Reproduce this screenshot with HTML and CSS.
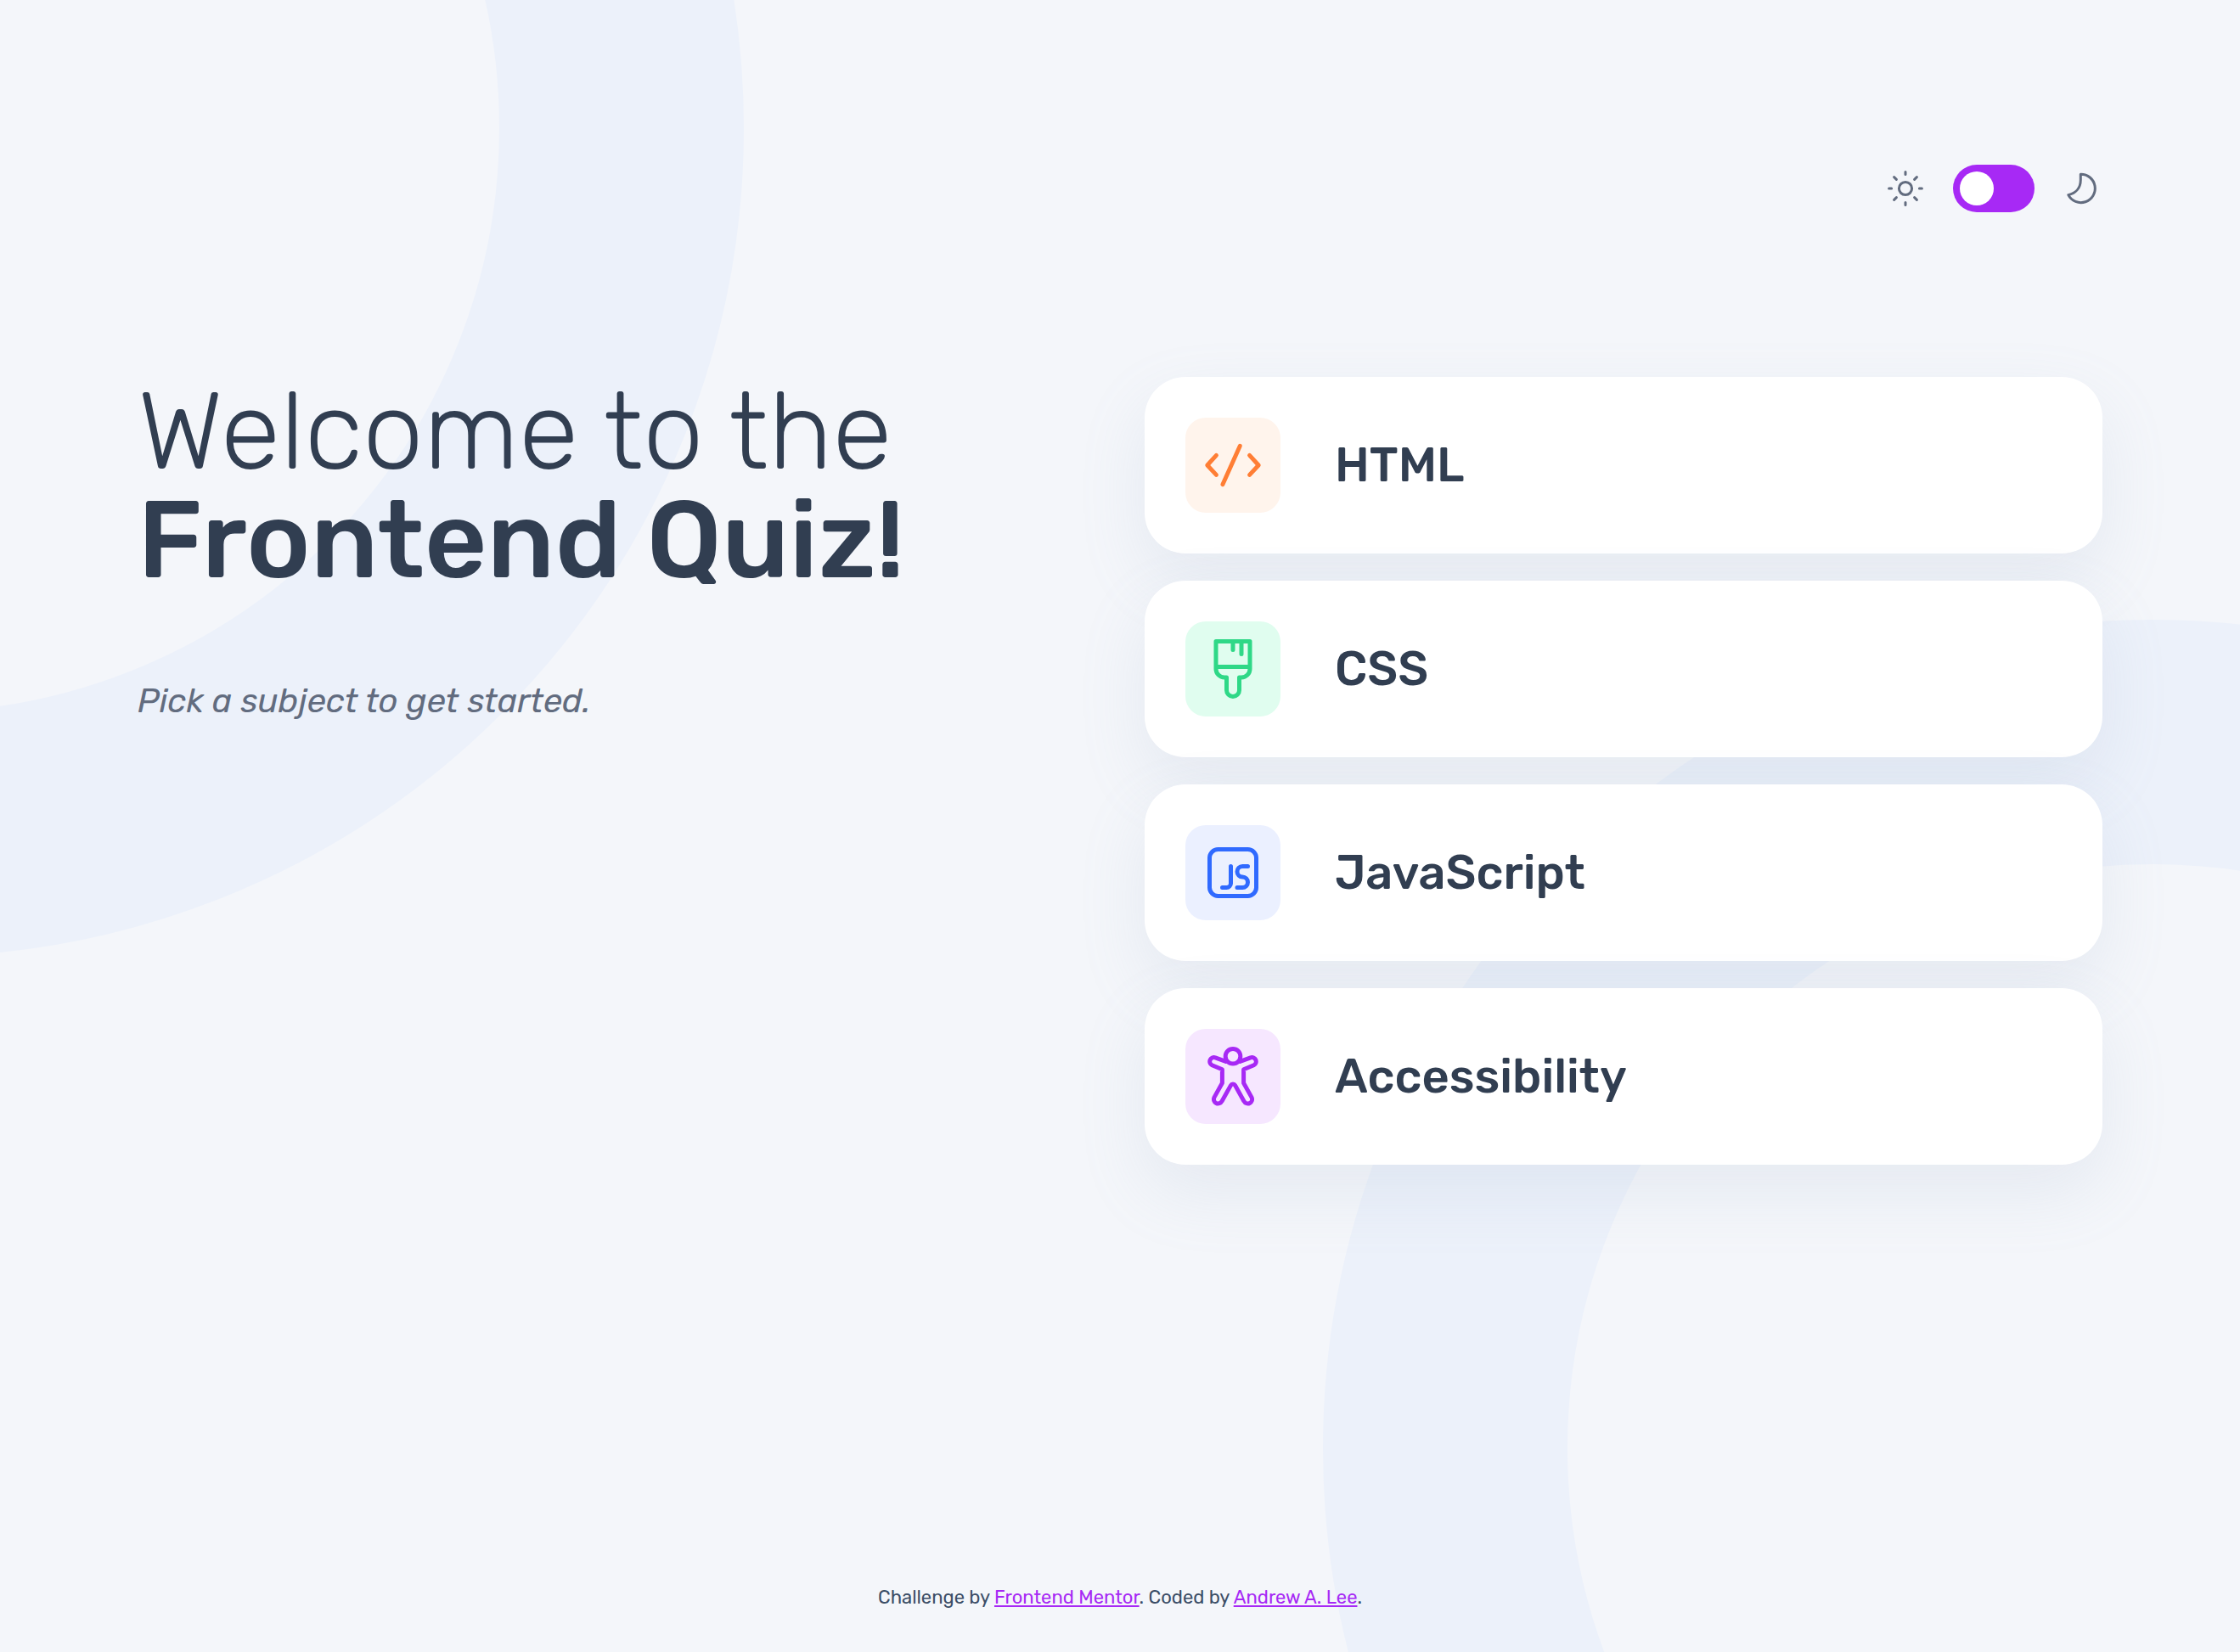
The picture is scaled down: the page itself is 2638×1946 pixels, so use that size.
FILE: index.html
```html
<!DOCTYPE html>
<html lang="en">
<head>
  <meta charset="utf-8">
  <meta name="viewport" content="width=device-width, initial-scale=1">
  <title>Frontend Quiz</title>
  <link rel="stylesheet" href="styles.css">
</head>
<body>
  <div class="page">
    <div class="backdrop" aria-hidden="true">
      <span class="ring ring-start"></span>
      <span class="ring ring-end"></span>
    </div>

    <header class="header">
      <svg class="theme-icon" viewBox="0 0 48 48" aria-hidden="true">
        <circle cx="24" cy="24" r="7.6"/>
        <path d="M24 4.6v3M24 40.4v3M4.6 24h3M40.4 24h3M10.6 10.6l2.8 2.8M34.6 34.6l2.8 2.8M10.6 37.4l2.8-2.8M34.6 13.4l2.8-2.8"/>
      </svg>
      <input class="switch" type="checkbox" role="switch" aria-label="Dark mode">
      <svg class="theme-icon" viewBox="0 0 48 48" aria-hidden="true">
        <path d="M22.3 7.2A16.7 16.7 0 1 1 7.8 31.6C16 29.8 22.3 24 22.3 14z"/>
      </svg>
    </header>

    <main class="main">
      <section class="intro">
        <h1 class="title"><span class="title-light">Welcome to the</span> <span class="title-strong">Frontend Quiz!</span></h1>
        <p class="hint">Pick a subject to get started.</p>
      </section>

      <ul class="subjects">
        <li>
          <button class="subject" type="button">
            <span class="badge badge-html">
              <svg class="badge-icon" viewBox="0 0 40 40" aria-hidden="true">
                <path d="M10.2 14.2 4.9 20l5.3 5.7M29.8 14.2l5.3 5.8-5.3 5.7M24.1 8.7 14 31.3"/>
              </svg>
            </span>
            HTML
          </button>
        </li>
        <li>
          <button class="subject" type="button">
            <span class="badge badge-css">
              <svg class="badge-icon" viewBox="0 0 40 40" aria-hidden="true">
                <path d="M10 3.75h20V20a5 5 0 0 1-5 5h-1.25v7.5a3.75 3.75 0 0 1-7.5 0V25H15a5 5 0 0 1-5-5zM10 18.75h20M20 3.75v5M25 3.75v7.5"/>
              </svg>
            </span>
            CSS
          </button>
        </li>
        <li>
          <button class="subject" type="button">
            <span class="badge badge-js">
              <svg class="badge-icon" viewBox="0 0 40 40" aria-hidden="true">
                <rect x="6.25" y="6.25" width="27.5" height="27.5" rx="5"/>
                <path d="M18.75 16.25v10a2.5 2.5 0 0 1-2.5 2.5h-2.5M28.75 16.25h-3.13a3.12 3.12 0 0 0 0 6.25 3.12 3.12 0 0 1 0 6.25H22.5"/>
              </svg>
            </span>
            JavaScript
          </button>
        </li>
        <li>
          <button class="subject" type="button">
            <span class="badge badge-a11y">
              <svg class="badge-icon" viewBox="0 0 40 40" aria-hidden="true">
                <circle cx="20" cy="8.1" r="4.4"/>
                <path d="M15.8 11.2 9.6 8.9a2.45 2.45 0 0 0-1.9 4.5l6 2.5v8L9 32.3a2.5 2.5 0 0 0 4.5 2.3l5.2-9.3a1.5 1.5 0 0 1 2.6 0l5.2 9.3a2.5 2.5 0 0 0 4.5-2.3l-4.7-8.4v-8l6-2.5a2.45 2.45 0 0 0-1.9-4.5l-6.2 2.3"/>
              </svg>
            </span>
            Accessibility
          </button>
        </li>
      </ul>
    </main>

    <footer class="footer">
      Challenge by <a class="link" href="https://www.frontendmentor.io">Frontend Mentor</a>. Coded by <a class="link" href="#">Andrew A. Lee</a>.
    </footer>
  </div>
</body>
</html>
```
FILE: styles.css
```css
:root {
  --navy: #313e51;
  --navy-mid: #3b4d66;
  --grey: #626c7f;
  --purple: #a729f5;
  --surface: #f4f6fa;
  --ring: #ecf1fa;
}

*,
*::before,
*::after {
  box-sizing: border-box;
}

body {
  margin: 0;
  background: var(--surface);
  color: var(--navy);
  font-family: Rubik, Inter, "Liberation Sans", sans-serif;
}

.page {
  position: relative;
  z-index: 0;
  display: flex;
  flex-direction: column;
  min-height: 100vh;
  padding: 194px 162px 50px;
}

/* Large rings behind the content */
.backdrop {
  position: absolute;
  inset: 0;
  z-index: -1;
  overflow: hidden;
}

.ring {
  position: absolute;
  width: 1952px;
  height: 1952px;
  border: 288px solid var(--ring);
  border-radius: 50%;
}

.ring-start {
  top: -825px;
  left: -1076px;
}

.ring-end {
  right: -872px;
  bottom: -736px;
}

/* Theme switch */
.header {
  display: flex;
  align-items: center;
  justify-content: flex-end;
  gap: 32px;
}

.theme-icon {
  width: 48px;
  height: 48px;
  fill: none;
  stroke: var(--grey);
  stroke-width: 3;
  stroke-linecap: round;
  stroke-linejoin: round;
}

.switch {
  appearance: none;
  display: flex;
  width: 96px;
  height: 56px;
  margin: 0;
  padding: 8px;
  border-radius: 28px;
  background: var(--purple);
  cursor: pointer;
}

.switch::before {
  content: "";
  width: 40px;
  height: 40px;
  border-radius: 50%;
  background: #fff;
}

.switch:checked {
  justify-content: flex-end;
}

/* Intro and subject list */
.main {
  display: grid;
  grid-template-columns: 1fr 1fr;
  gap: 58px;
  flex: 1;
  align-items: start;
  margin-top: 194px;
}

.title {
  margin: 0 0 96px;
  font-size: 128px;
  line-height: 128px;
}

.title-light,
.title-strong {
  display: block;
}

.title-light {
  font-weight: 300;
}

.title-strong {
  font-weight: 500;
}

.hint {
  margin: 0;
  color: var(--grey);
  font-size: 40px;
  font-style: italic;
  line-height: 60px;
}

.subjects {
  display: grid;
  gap: 32px;
  margin: 0;
  padding: 0;
  list-style: none;
}

.subject {
  display: flex;
  align-items: center;
  gap: 64px;
  width: 100%;
  padding: 48px;
  border: 0;
  border-radius: 48px;
  background: #fff;
  box-shadow: 0 32px 80px rgba(143, 160, 193, 0.14);
  color: inherit;
  font: inherit;
  font-size: 56px;
  font-weight: 500;
  text-align: left;
  cursor: pointer;
}

.badge {
  display: grid;
  place-items: center;
  width: 112px;
  height: 112px;
  border-radius: 24px;
}

.badge-icon {
  width: 80px;
  height: 80px;
  fill: none;
  stroke: currentColor;
  stroke-width: 2.5;
  stroke-linecap: round;
  stroke-linejoin: round;
}

.badge-html {
  background: #fff4ec;
  color: #ff7e35;
}

.badge-css {
  background: #e0fdef;
  color: #2fd887;
}

.badge-js {
  background: #ebf0ff;
  color: #306aff;
}

.badge-a11y {
  background: #f6e7ff;
  color: var(--purple);
}

.footer {
  color: var(--navy-mid);
  font-size: 22px;
  line-height: 28px;
  text-align: center;
}

.link {
  color: var(--purple);
}

@media (max-width: 2000px) {
  .page {
    padding: 64px 64px 48px;
  }

  .main {
    grid-template-columns: 1fr;
    margin-top: 96px;
    margin-bottom: 96px;
  }

  .title {
    margin-bottom: 48px;
  }
}
```
